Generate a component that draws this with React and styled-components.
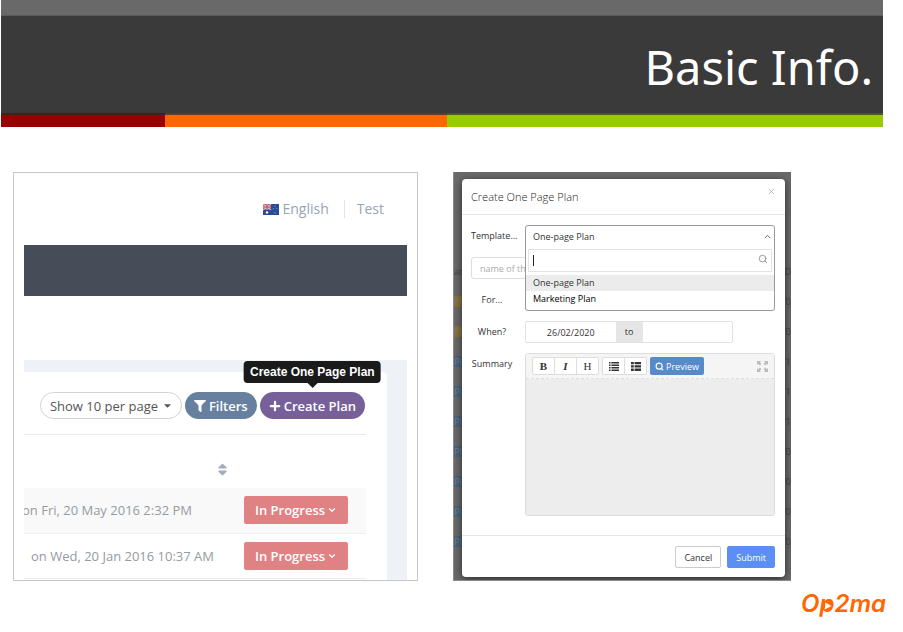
import React from "react";
import styled, { createGlobalStyle } from "styled-components";
import { FaCaretDown, FaFilter, FaPlus, FaSort } from "react-icons/fa";
import { ChevronDown, ChevronUp, Search, X } from "lucide-react";

const plans = [
  { date: "on Fri, 20 May 2016 2:32 PM", indent: -2, odd: true },
  { date: "on Wed, 20 Jan 2016 10:37 AM", indent: 7, odd: false },
];

const behindRows = [
  { tag: "#8a7338", end: "/0" },
  { tag: "#8a7338", end: "/0" },
  { tag: "#4a6580", end: "/1" },
  { tag: "#4a6580", end: "/1" },
  { tag: "#4a6580", end: "/1" },
  { tag: "#4a6580", end: "/0" },
  { tag: "#4a6580", end: "/0" },
  { tag: "#4a6580", end: "/0" },
  { tag: "#4a6580", end: "/0" },
];

const Flag = () => (
  <svg width="16" height="11" viewBox="0 0 16 11" aria-hidden="true">
    <rect width="16" height="11" fill="#2a4b96" />
    <path d="M0 0L8 6M8 0L0 6" stroke="#d9a5b5" strokeWidth="1.4" />
    <path d="M4 0V6M0 3H8" stroke="#f3d5d8" strokeWidth="2.4" />
    <path d="M4 0V6M0 3H8" stroke="#e0535b" strokeWidth="1.4" />
    <circle cx="4" cy="8.4" r="1.2" fill="#fff" />
    <g fill="#8fa3d3">
      <circle cx="12" cy="2" r="0.6" />
      <circle cx="10.3" cy="4.8" r="0.6" />
      <circle cx="13.8" cy="4.3" r="0.6" />
      <circle cx="12" cy="8.8" r="0.7" />
    </g>
  </svg>
);

const ExpandIcon = () => (
  <svg width="11" height="11" viewBox="0 0 11 11" fill="#bbb" aria-hidden="true">
    <path d="M0 0H4L2.8 1.2L4.4 2.8L3 4.4L1.2 2.7L0 4Z" />
    <path d="M11 0H7L8.2 1.2L6.6 2.8L8 4.4L9.8 2.7L11 4Z" />
    <path d="M0 11H4L2.8 9.8L4.4 8.2L3 6.6L1.2 8.3L0 7Z" />
    <path d="M11 11H7L8.2 9.8L6.6 8.2L8 6.6L9.8 8.3L11 7Z" />
  </svg>
);

const BulletsIcon = () => (
  <svg width="10" height="9" viewBox="0 0 10 9" fill="#333" aria-hidden="true">
    <path d="M0 0H1.6V1.5H0ZM2.4 0H10V1.5H2.4ZM0 2.5H1.6V4H0ZM2.4 2.5H10V4H2.4Z" />
    <path d="M0 5H1.6V6.5H0ZM2.4 5H10V6.5H2.4ZM0 7.5H1.6V9H0ZM2.4 7.5H10V9H2.4Z" />
  </svg>
);

const BlocksIcon = () => (
  <svg width="10" height="9" viewBox="0 0 10 9" fill="#333" aria-hidden="true">
    <path d="M0 0H2.8V2.3H0ZM3.6 0H10V2.3H3.6ZM0 3.3H2.8V5.6H0Z" />
    <path d="M3.6 3.3H10V5.6H3.6ZM0 6.6H2.8V9H0ZM3.6 6.6H10V9H3.6Z" />
  </svg>
);

const App = () => {
  return (
    <>
      <GlobalStyle />
      <Header>
        <TopStrip />
        <TitleBar>
          <h1>Basic Info.</h1>
        </TitleBar>
        <Stripes>
          <Stripe $color="#990000" />
          <Stripe $color="#ff6600" />
          <Stripe $color="#99cc00" />
        </Stripes>
      </Header>

      <Shots>
        <ListShot>
          <TopLinks>
            <a href="#language"><Flag />English</a>
            <a href="#account">Test</a>
          </TopLinks>
          <NavBar />
          <Workspace>
            <Card>
              <Toolbar>
                <PageSize>
                  <select aria-label="Rows per page">
                    <option>Show 10 per page</option>
                  </select>
                  <FaCaretDown size={11} />
                </PageSize>
                <Pill $color="#67809f"><FaFilter size={12} />Filters</Pill>
                <TipAnchor>
                  <Pill $color="#776099" aria-describedby="tip"><FaPlus size={12} />Create Plan</Pill>
                  <Tooltip id="tip" role="tooltip">Create One Page Plan</Tooltip>
                </TipAnchor>
              </Toolbar>
              <PlanTable>
                <thead>
                  <tr>
                    <th><FaSort size={15} /></th>
                    <th></th>
                  </tr>
                </thead>
                <tbody>
                  {plans.map(el => {
                    return (
                      <PlanRow key={el.date} $odd={el.odd}>
                        <DateCell $indent={el.indent}>{el.date}</DateCell>
                        <td>
                          <Status>In Progress<ChevronDown size={10} strokeWidth={3} /></Status>
                        </td>
                      </PlanRow>
                    )
                  })}
                </tbody>
              </PlanTable>
            </Card>
          </Workspace>
        </ListShot>

        <ModalShot>
          <Behind aria-hidden="true">
            <BehindRow><span>ate</span><span>D</span></BehindRow>
            {behindRows.map((el, i) => {
              return (
                <BehindRow key={i}>
                  <Tag $color={el.tag}>Pla</Tag>
                  <span>{el.end}</span>
                </BehindRow>
              )
            })}
          </Behind>
          <Modal>
            <ModalHead>
              <h2>Create One Page Plan</h2>
              <Close aria-label="Close"><X size={9} strokeWidth={2} /></Close>
            </ModalHead>
            <Form>
              <Row>
                <Label id="template-label">Template...</Label>
                <Field>
                  <Dropdown>
                    <Selected type="button" aria-labelledby="template-label" aria-haspopup="listbox" aria-expanded="true">
                      One-page Plan<ChevronUp size={9} />
                    </Selected>
                    <SearchBox>
                      <Caret />
                      <input aria-label="Search templates" />
                      <Search size={10} />
                    </SearchBox>
                    <Options role="listbox">
                      <Option role="option" aria-selected="true" $active>One-page Plan</Option>
                      <Option role="option" aria-selected="false">Marketing Plan</Option>
                    </Options>
                  </Dropdown>
                </Field>
              </Row>
              <TextInput aria-label="Plan name" placeholder="name of the plan" />
              <Row>
                <Label as="label" htmlFor="for">For...</Label>
                <Field><TextInput id="for" /></Field>
              </Row>
              <Row>
                <Label as="label" htmlFor="from">When?</Label>
                <Field>
                  <DateRange>
                    <input id="from" defaultValue="26/02/2020" />
                    <span>to</span>
                    <input aria-label="End date" />
                  </DateRange>
                </Field>
              </Row>
              <Row>
                <Label as="label" htmlFor="summary">Summary</Label>
                <Editor>
                  <EditorBar>
                    <Group>
                      <button type="button" aria-label="Bold"><Glyph $bold>B</Glyph></button>
                      <button type="button" aria-label="Italic"><Glyph $bold $italic>I</Glyph></button>
                      <button type="button" aria-label="Heading"><Glyph>H</Glyph></button>
                    </Group>
                    <Group>
                      <button type="button" aria-label="Bulleted list"><BulletsIcon /></button>
                      <button type="button" aria-label="Numbered list"><BlocksIcon /></button>
                    </Group>
                    <Preview type="button"><Search size={9} strokeWidth={3} />Preview</Preview>
                    <Expand type="button" aria-label="Full screen"><ExpandIcon /></Expand>
                  </EditorBar>
                  <textarea id="summary" />
                </Editor>
              </Row>
            </Form>
            <ModalFoot>
              <FootButton>Cancel</FootButton>
              <FootButton $primary>Submit</FootButton>
            </ModalFoot>
          </Modal>
        </ModalShot>
      </Shots>

      <Brand>
        O
        <PlayP>
          p
          <svg width="10" height="10" viewBox="0 0 10 10" aria-hidden="true">
            <circle cx="5" cy="5" r="4.6" fill="#ff6600" />
            <path d="M2.4 1.4L8.6 5L1.8 8.6Z" fill="#fff" />
          </svg>
        </PlayP>
        2ma
      </Brand>
    </>
  )
}

export default App

const GlobalStyle = createGlobalStyle`
  * {
    box-sizing: border-box;
  }
  body {
    margin: 0;
    background: #fff;
    font-family: "Open Sans", "Noto Sans", sans-serif;
  }
  h1, h2, ul {
    margin: 0;
    padding: 0;
    font-weight: 400;
  }
  button, input, select, textarea {
    font-family: inherit;
    font-size: inherit;
    color: inherit;
    margin: 0;
    padding: 0;
    border: 0;
    outline: 0;
    background: none;
  }
  svg {
    display: block;
    flex: none;
  }
`;

const Header = styled.header`
  margin: 0 20px 0 1px;
`;

const TopStrip = styled.div`
  height: 16px;
  background: #696969;
  border-bottom: 1px solid #5a5a5a;
`;

const TitleBar = styled.div`
  height: 97px;
  padding: 4px 10px 0 0;
  display: flex;
  align-items: center;
  justify-content: flex-end;
  background: #3a3a3a;
  color: white;
  h1 {
    font-family: "Noto Sans", sans-serif;
    font-size: 47px;
    line-height: 64px;
  }
`;

const Stripes = styled.div`
  display: grid;
  grid-template-columns: 164fr 282fr 436fr;
`;

const Stripe = styled.div`
  height: 14px;
  background: ${props => props.$color};
  box-shadow: inset 0 2px 0 rgba(40, 40, 40, 0.7);
`;

const Shots = styled.main`
  margin: 45px 112px 0 13px;
  display: grid;
  grid-template-columns: 405fr 338fr;
  gap: 35px;
`;

const ListShot = styled.section`
  min-width: 0;
  border: 1px solid #c6c6c6;
  padding: 0 10px;
  font-size: 13px;
  display: flex;
  flex-direction: column;
`;

const TopLinks = styled.nav`
  height: 72px;
  padding-right: 23px;
  display: flex;
  align-items: center;
  justify-content: flex-end;
  font-size: 14px;
  a {
    display: flex;
    align-items: center;
    gap: 3px;
    line-height: 18px;
    color: #96a5b8;
    text-decoration: none;
  }
  a + a {
    margin-left: 15px;
    padding-left: 12px;
    border-left: 1px solid #dfe4ea;
  }
`;

const NavBar = styled.div`
  height: 51px;
  background: #464d58;
`;

const Workspace = styled.div`
  margin-top: 64px;
  padding: 12px 20px 0 0;
  flex: 1;
  background: #eef2f7;
`;

const Card = styled.div`
  height: 100%;
  padding-right: 21px;
  background: white;
  border-top-right-radius: 4px;
`;

const Toolbar = styled.div`
  height: 63px;
  padding: 20px 1px 15px 0;
  display: flex;
  justify-content: flex-end;
  gap: 3px;
  border-bottom: 1px solid #ebebeb;
`;

const PageSize = styled.label`
  height: 27px;
  padding: 0 8px 0 9px;
  display: flex;
  align-items: center;
  border: 1px solid #d2d2d2;
  border-radius: 14px;
  color: #555;
  select {
    appearance: none;
    margin-right: 3px;
  }
`;

const Pill = styled.button`
  height: 27px;
  padding: 0 9px;
  display: flex;
  align-items: center;
  gap: 3px;
  border-radius: 14px;
  background: ${props => props.$color};
  color: white;
  font-weight: 600;
`;

const TipAnchor = styled.div`
  position: relative;
`;

const Tooltip = styled.div`
  position: absolute;
  left: 50%;
  bottom: 36px;
  transform: translateX(-50%);
  padding: 0 6px;
  border-radius: 4px;
  background: #1a1a1a;
  color: white;
  font: 700 12px/22px "Liberation Sans", sans-serif;
  white-space: nowrap;
  &::after {
    content: "";
    position: absolute;
    top: 100%;
    left: 50%;
    margin-left: -5px;
    border: 5px solid transparent;
    border-top-color: #1a1a1a;
    border-bottom: 0;
  }
`;

const PlanTable = styled.table`
  width: 100%;
  table-layout: fixed;
  border-collapse: collapse;
  th, td {
    padding: 0;
  }
  th {
    height: 53px;
    padding-top: 15px;
    color: #a3aeb9;
  }
  th:first-child {
    width: 220px;
  }
  th svg {
    margin-left: 191px;
  }
`;

const PlanRow = styled.tr`
  height: 45px;
  background: ${props => props.$odd ? "#f9f9f9" : "white"};
  border-bottom: 1px solid #efefef;
`;

const DateCell = styled.td`
  overflow: hidden;
  white-space: nowrap;
  text-indent: ${props => props.$indent}px;
  color: #959ba3;
`;

const Status = styled.button`
  height: 28px;
  width: 104px;
  display: flex;
  align-items: center;
  justify-content: center;
  gap: 2px;
  border-radius: 2px;
  background: #e08283;
  color: white;
  font-weight: 600;
`;

const ModalShot = styled.section`
  min-width: 0;
  position: relative;
  overflow: hidden;
  padding: 7px 6px 3px 8px;
  background: #6a6a6a;
  border: 1px solid #8a8a8a;
  border-width: 0 0 1px 1px;
  font-size: 9px;
`;

/* the plan list that shows round the dialog */
const Behind = styled.div`
  position: absolute;
  inset: 0;
  padding-top: 84px;
  display: flex;
  flex-direction: column;
  color: #444;
`;

const BehindRow = styled.div`
  height: 30px;
  display: flex;
  align-items: center;
  justify-content: space-between;
  line-height: 11px;
`;

const Tag = styled.span`
  background: ${props => props.$color};
  color: #7d7d7d;
`;

const Modal = styled.div`
  position: relative;
  background: white;
  border-radius: 4px;
  box-shadow: 0 2px 8px rgba(0, 0, 0, 0.6);
  color: #333;
`;

const ModalHead = styled.div`
  height: 36px;
  padding: 0 9px;
  display: flex;
  align-items: center;
  justify-content: space-between;
  border-bottom: 1px solid #e8e8e8;
  h2 {
    font-size: 11px;
    font-weight: 300;
    color: #222;
  }
`;

const Close = styled.button`
  align-self: flex-start;
  margin-top: 8px;
  color: #aaa;
`;

const Form = styled.form`
  padding: 10px 10px 19px 9px;
  display: grid;
  gap: 10px;
`;

const Row = styled.div`
  display: grid;
  grid-template-columns: 42px minmax(0, 1fr);
  column-gap: 12px;
`;

const Label = styled.span`
  line-height: 22px;
  text-align: center;
  white-space: nowrap;
`;

const Field = styled.div`
  position: relative;
  height: 22px;
`;

const TextInput = styled.input`
  width: 100%;
  height: 22px;
  padding: 0 8px;
  border: 1px solid #dedede;
  border-radius: 3px;
  &::placeholder {
    color: #aaa;
  }
`;

const Dropdown = styled.div`
  position: absolute;
  top: 0;
  left: 0;
  right: 0;
  z-index: 1;
  height: 86px;
  border: 1px solid #999;
  border-radius: 3px;
  background: white;
`;

const Selected = styled.button`
  width: 100%;
  height: 20px;
  padding: 0 2px 0 7px;
  display: flex;
  align-items: center;
  justify-content: space-between;
`;

const SearchBox = styled.div`
  height: 23px;
  margin: 3px 2px;
  padding: 0 3px 3px 4px;
  display: flex;
  align-items: center;
  border: 1px solid #e3e3e3;
  color: #888;
  input {
    flex: 1;
    min-width: 0;
  }
`;

const Caret = styled.span`
  width: 1px;
  height: 11px;
  margin-top: 3px;
  background: #222;
`;

const Options = styled.ul`
  list-style: none;
`;

const Option = styled.li`
  padding-left: 7px;
  line-height: 16px;
  background: ${props => props.$active ? "#ececec" : "white"};
  color: ${props => props.$active ? "#333" : "#000"};
`;

const DateRange = styled.div`
  height: 22px;
  width: 208px;
  display: flex;
  border: 1px solid #e2e2e2;
  border-radius: 2px;
  input {
    flex: 1;
    min-width: 0;
    text-align: center;
  }
  span {
    width: 27px;
    line-height: 20px;
    text-align: center;
    background: #e5e5e5;
  }
`;

const Editor = styled.div`
  border: 1px solid #ddd;
  border-radius: 3px;
  background: #ededed;
  textarea {
    display: block;
    width: 100%;
    height: 136px;
    resize: none;
  }
`;

const EditorBar = styled.div`
  height: 25px;
  padding: 0 6px;
  display: flex;
  align-items: center;
  gap: 3px;
  background: #f5f5f5;
  border-bottom: 1px dashed #ddd;
`;

const Group = styled.div`
  display: flex;
  border: 1px solid #ddd;
  border-radius: 2px;
  background: white;
  button {
    width: 21px;
    height: 16px;
    display: grid;
    place-items: center;
  }
  button + button {
    width: 22px;
    border-left: 1px solid #ddd;
  }
`;

const Glyph = styled.span`
  font: 400 11px "Liberation Serif", serif;
  font-weight: ${props => props.$bold ? 700 : 400};
  font-style: ${props => props.$italic ? "italic" : "normal"};
`;

const Preview = styled.button`
  height: 18px;
  padding: 0 5px;
  display: flex;
  align-items: center;
  gap: 2px;
  border-radius: 2px;
  background: #578ac8;
  color: white;
`;

const Expand = styled.button`
  margin-left: auto;
`;

const ModalFoot = styled.div`
  padding: 10px 10px 9px;
  display: flex;
  justify-content: flex-end;
  gap: 6px;
  border-top: 1px solid #e5e5e5;
`;

const FootButton = styled.button`
  height: 22px;
  padding: 0 8px;
  border: 1px solid ${props => props.$primary ? "#5b8ff5" : "#ccc"};
  border-radius: 2px;
  background: ${props => props.$primary ? "#5b8ff5" : "white"};
  color: ${props => props.$primary ? "white" : "#333"};
`;

const Brand = styled.footer`
  padding: 8px 17px 0 0;
  display: flex;
  justify-content: flex-end;
  font: italic 600 24px/30px Inter, sans-serif;
  color: #ff6600;
`;

const PlayP = styled.span`
  position: relative;
  svg {
    position: absolute;
    left: 4px;
    top: 12px;
  }
`;
